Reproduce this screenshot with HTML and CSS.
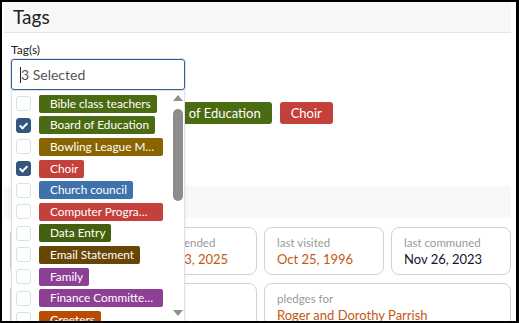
FILE: index.html
```html
<!DOCTYPE html>
<html lang="en">
<head>
    <meta charset="UTF-8">
    <meta name="viewport" content="width=device-width, initial-scale=1.0">
    <title>Tags</title>
    <link rel="stylesheet" href="styles.css">
</head>
<body>
    <div class="frame">
        <div class="panel-head">Tags</div>

        <div class="tag-field">
            <label class="field-label">Tag(s)</label>
            <div class="select-input"><span class="caret"></span>3 Selected</div>

            <div class="chosen">
                <span class="chip green">Youth Committee</span>
                <span class="chip green">Board of Education</span>
                <span class="chip red">Choir</span>
            </div>

            <div class="dropdown">
                <ul class="options">
                    <li><span class="box"></span><span class="opt green">Bible class teachers</span></li>
                    <li><span class="box checked"></span><span class="opt green">Board of Education</span></li>
                    <li><span class="box"></span><span class="opt gold">Bowling League Members</span></li>
                    <li><span class="box checked"></span><span class="opt red">Choir</span></li>
                    <li><span class="box"></span><span class="opt blue">Church council</span></li>
                    <li><span class="box"></span><span class="opt red">Computer Programmers</span></li>
                    <li><span class="box"></span><span class="opt dgreen">Data Entry</span></li>
                    <li><span class="box"></span><span class="opt brown">Email Statement</span></li>
                    <li><span class="box"></span><span class="opt purple">Family</span></li>
                    <li><span class="box"></span><span class="opt purple">Finance Committee Members</span></li>
                    <li><span class="box"></span><span class="opt orange">Greeters</span></li>
                </ul>
                <div class="scrollbar">
                    <span class="arrow up"></span>
                    <span class="thumb"></span>
                    <span class="arrow down"></span>
                </div>
            </div>
        </div>

        <div class="panel-head second">Attendance</div>

        <div class="cards">
            <div class="card">
                <div class="card-label">last present</div>
                <div class="card-value">Nov 23, 2025</div>
            </div>
            <div class="card">
                <div class="card-label">last attended</div>
                <div class="card-value">Nov 23, 2025</div>
            </div>
            <div class="card">
                <div class="card-label">last visited</div>
                <div class="card-value">Oct 25, 1996</div>
            </div>
            <div class="card">
                <div class="card-label">last communed</div>
                <div class="card-value dark">Nov 26, 2023</div>
            </div>
            <div class="card tall"></div>
            <div class="card tall"></div>
            <div class="card tall wide">
                <div class="card-label">pledges for</div>
                <div class="card-value">Roger and Dorothy Parrish</div>
            </div>
        </div>
    </div>
</body>
</html>
```

FILE: styles.css
```css
body {
    margin: 0;
    background-color: #000;
    font-family: Lato, "Open Sans", sans-serif;
}
.frame {
    margin: 2px 3px 2px 2px;
    height: 319px;
    background-color: #fff;
    overflow: hidden;
    position: relative;
}
.panel-head {
    margin-left: 2px;
    width: 498px;
    height: 30px;
    padding-left: 9px;
    background-color: #f8f8f8;
    border-bottom: 1px solid #e4e4e4;
    font-size: 19px;
    line-height: 30px;
    color: #222;
}
.panel-head.second {
    margin-top: 62px;
    height: 32px;
    border-bottom: none;
    font-size: 16px;
    line-height: 32px;
}
.tag-field {
    position: relative;
    padding: 9px 0 0 9px;
}
.field-label {
    display: block;
    font-size: 12px;
    color: #222;
    line-height: 15px;
}
.select-input {
    margin-top: 2px;
    width: 164px;
    height: 29px;
    padding-left: 8px;
    border: 1px solid #3b5f86;
    border-radius: 3px;
    box-shadow: 0 0 0 1px #d6e2ee;
    font-size: 14px;
    line-height: 29px;
    color: #555;
    display: flex;
    align-items: center;
}
.caret {
    width: 1px;
    height: 16px;
    background-color: #222;
}
.chosen {
    display: flex;
    gap: 8px;
    margin-top: 12px;
}
.chip {
    height: 22px;
    line-height: 22px;
    padding: 0 11px;
    border-radius: 3px;
    font-size: 13px;
    color: #fff;
}
.dropdown {
    position: absolute;
    left: 9px;
    top: 57px;
    width: 172px;
    height: 240px;
    background-color: #fff;
    border: 1px solid #d8e4e8;
    box-shadow: 0 2px 4px rgba(0, 0, 0, 0.08);
    display: flex;
}
.options {
    list-style: none;
    margin: 0;
    padding: 2px 0 0 4px;
    flex: 1;
    min-width: 0;
}
.options li {
    height: 21.6px;
    display: flex;
    align-items: center;
    gap: 8px;
}
.box {
    flex: none;
    width: 13px;
    height: 13px;
    border: 1px solid #d3e3e6;
    border-radius: 3px;
    background-color: #fff;
    position: relative;
}
.box.checked {
    background-color: #34557d;
    border-color: #34557d;
}
.box.checked::after {
    content: "";
    position: absolute;
    left: 4px;
    top: 2px;
    width: 3px;
    height: 6px;
    border: solid #fff;
    border-width: 0 2px 2px 0;
    transform: rotate(45deg);
}
.opt {
    max-width: 107px;
    height: 18px;
    line-height: 18px;
    padding: 0 6px 0 11px;
    border-radius: 2px;
    font-size: 11.8px;
    color: #fff;
    white-space: nowrap;
    overflow: hidden;
    text-overflow: ellipsis;
}
.green { background-color: #4b6b12; }
.dgreen { background-color: #43600e; }
.gold { background-color: #8a6400; }
.red { background-color: #c4403a; }
.blue { background-color: #3f72ad; }
.brown { background-color: #674605; }
.purple { background-color: #8d3e95; }
.orange { background-color: #b74d04; }
.scrollbar {
    flex: none;
    width: 13px;
    display: flex;
    flex-direction: column;
    align-items: center;
    padding-top: 4px;
}
.arrow {
    width: 0;
    height: 0;
    border-left: 5px solid transparent;
    border-right: 5px solid transparent;
}
.arrow.up {
    border-bottom: 6px solid #8f8f8f;
}
.arrow.down {
    margin-top: 109px;
    border-top: 6px solid #8f8f8f;
}
.thumb {
    margin-top: 8px;
    width: 10px;
    height: 92px;
    border-radius: 5px;
    background-color: #8d8d8d;
}
.cards {
    display: grid;
    grid-template-columns: repeat(4, 120px);
    gap: 8px 7px;
    margin: 9px 0 0 8px;
}
.card {
    height: 46px;
    padding: 0 12px;
    border: 1px solid #d2d2d2;
    border-radius: 8px;
}
.card.tall {
    height: 60px;
}
.card.wide {
    grid-column: span 2;
}
.card-label {
    margin-top: 6px;
    font-size: 11.5px;
    color: #9a9a9a;
    line-height: 17px;
}
.card-value {
    font-size: 13px;
    color: #c4580f;
    line-height: 16px;
}
.card-value.dark {
    color: #151530;
}
```
